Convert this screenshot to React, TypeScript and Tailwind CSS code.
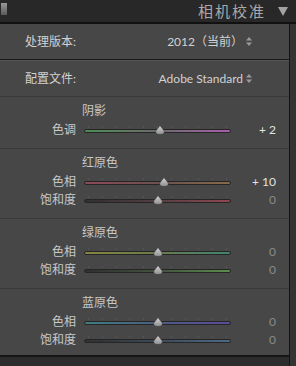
const font = { fontFamily: 'Lato, "Noto Sans CJK SC", sans-serif' };

type SliderProps = {
  label: string;
  value: string;
  pos: number;
  track: string;
  bright?: boolean;
};

const UpDown = () => (
  <svg width="6" height="9" viewBox="0 0 6 9" className="ml-[3px]">
    <path d="M3 0 L6 3.5 L0 3.5 Z" fill="#9a9a9a" />
    <path d="M3 9 L6 5.5 L0 5.5 Z" fill="#9a9a9a" />
  </svg>
);

const Thumb = () => (
  <svg width="11" height="10" viewBox="0 0 11 10">
    <defs>
      <linearGradient id="tg" x1="0" y1="0" x2="0" y2="1">
        <stop offset="0" stopColor="#d4d4d4" />
        <stop offset="1" stopColor="#8e8e8e" />
      </linearGradient>
    </defs>
    <path d="M5.5 0.5 L9.8 6 Q10.2 9.5 5.5 9.5 Q0.8 9.5 1.2 6 Z" fill="url(#tg)" stroke="#3a3a3a" strokeWidth="0.6" />
  </svg>
);

const Slider = ({ label, value, pos, track, bright }: SliderProps) => (
  <div className="flex h-[18px] items-center">
    <div className="w-[76px] text-right text-[12px] leading-none text-[#c8c8c8]">{label}</div>
    <div className="relative ml-[8px] h-[18px] w-[147px]">
      <div className="absolute left-0 right-0 top-[5px] flex justify-between px-[4px]">
        {Array.from({ length: 11 }).map((_, i) => (
          <div key={i} className="h-[2px] w-px bg-[#555555]" />
        ))}
      </div>
      <div className={`absolute left-0 right-0 top-[8px] h-[4px] rounded-full border border-[#262626] ${track}`} />
      <div className="absolute top-[4px] -translate-x-1/2" style={{ left: `${pos}%` }}>
        <Thumb />
      </div>
    </div>
    <div
      className={`w-[45px] text-right text-[12px] leading-none ${bright ? "text-[#e2e2e2]" : "text-[#8a8a8a]"}`}
    >
      {value}
    </div>
  </div>
);

const Section = ({ title, last, children }: { title: string; last?: boolean; children: React.ReactNode }) => (
  <div className={`border-t border-[#3a3a3a] pt-[4px] ${last ? "pb-[6px]" : "pb-[9px]"}`}>
    <div className="flex h-[20px] items-center pl-[82px] text-[12px] leading-none text-[#c8c8c8]">{title}</div>
    {children}
  </div>
);

export default function App() {
  return (
    <div className="flex h-[366px] w-[296px] flex-col overflow-hidden bg-[#2c2c2c]" style={font}>
      <div className="relative flex h-[22px] shrink-0 items-center justify-end bg-[#282828] pr-[8px]">
        <div className="absolute left-[1px] top-[3px] h-[12px] w-[6px] bg-linear-to-b from-[#9a9a9a] to-[#5a5a5a]" />
        <div className="text-[15px] leading-none tracking-[2px] text-[#a9a9a9]">相机校准</div>
        <svg width="10" height="9" viewBox="0 0 10 9" className="ml-[12px]">
          <path d="M0 0 L10 0 L5 9 Z" fill="#a3a3a3" />
        </svg>
      </div>
      <div className="h-[2px] shrink-0 bg-[#111111]" />
      <div className="flex min-h-0 flex-1 items-start">
        <div className="flex w-[289px] shrink-0 flex-col border-b-2 border-[#151515] bg-[#474747]">
          <div className="flex h-[35px] shrink-0 items-center justify-between pl-[25px] pr-[37px] text-[12px] text-[#d2d2d2]">
            <span>处理版本:</span>
            <span className="flex items-center">
              2012（当前）
              <UpDown />
            </span>
          </div>
          <div className="h-px shrink-0 bg-[#1a1a1a]" />
          <div className="h-px shrink-0 bg-[#545454]" />
          <div className="flex h-[35px] shrink-0 items-center justify-between pl-[25px] pr-[37px] text-[12px] text-[#d2d2d2]">
            <span>配置文件:</span>
            <span className="flex items-center">
              Adobe Standard
              <UpDown />
            </span>
          </div>
          <Section title="阴影">
            <Slider label="色调" value="+ 2" pos={52} bright track="bg-linear-to-r from-[#4a8c54] via-[#6a6a6a] to-[#a85cae]" />
          </Section>
          <Section title="红原色">
            <Slider label="色相" value="+ 10" pos={54.5} bright track="bg-linear-to-r from-[#8e4858] via-[#6c5050] to-[#866a48]" />
            <Slider label="饱和度" value="0" pos={50} track="bg-linear-to-r from-[#303030] via-[#553e42] to-[#904652]" />
          </Section>
          <Section title="绿原色">
            <Slider label="色相" value="0" pos={50} track="bg-linear-to-r from-[#86863e] via-[#687a4c] to-[#3e8470]" />
            <Slider label="饱和度" value="0" pos={50} track="bg-linear-to-r from-[#303030] via-[#43523e] to-[#5a8e4c]" />
          </Section>
          <Section title="蓝原色" last>
            <Slider label="色相" value="0" pos={50} track="bg-linear-to-r from-[#3e7e80] via-[#4a5c80] to-[#5a4a9a]" />
            <Slider label="饱和度" value="0" pos={50} track="bg-linear-to-r from-[#303030] via-[#3c4a58] to-[#4c6a86]" />
          </Section>
        </div>
        <div className="h-full flex-1 border-l border-[#141414] bg-[#343434]" />
      </div>
    </div>
  );
}
